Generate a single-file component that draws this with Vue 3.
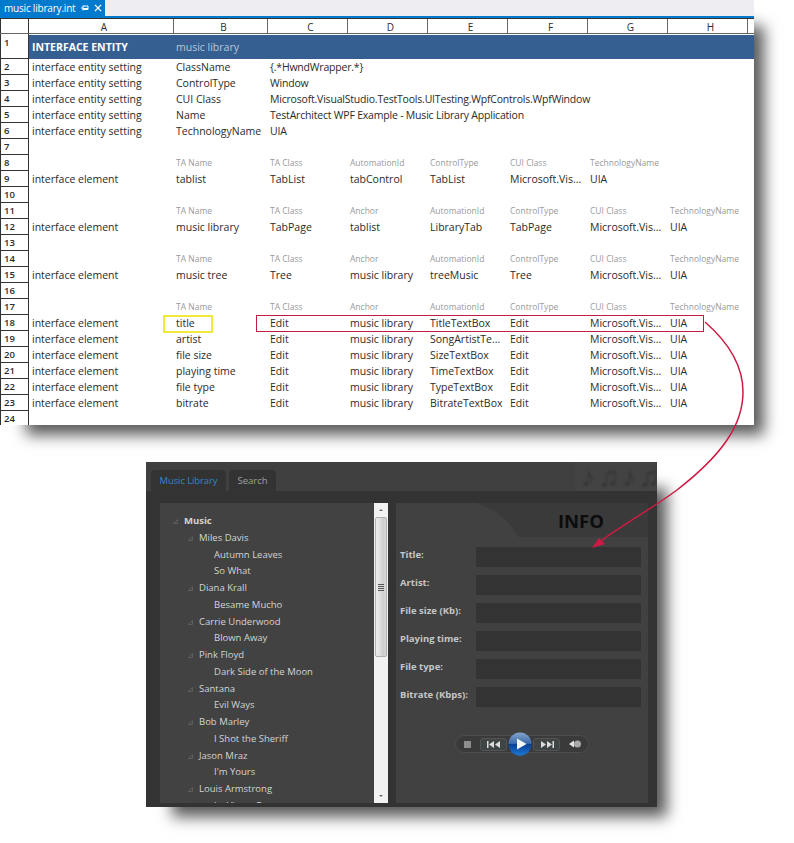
<template>
  <div class="page">
    <div class="sheet-wrap">
      <div class="doc-tabs">
        <div class="doc-tab">
          <span class="doc-name">music library.int</span>
          <svg class="pin" width="10" height="10" viewBox="0 0 10 10">
            <path d="M1 5h2M3 2.500v5M3 3h5v3.500H3M3 5.500h5" fill="none" stroke="#fff" stroke-width="1" />
          </svg>
          <svg class="close" width="8" height="8" viewBox="0 0 9 9">
            <path d="M1 1l7 7M8 1l-7 7" fill="none" stroke="#fff" stroke-width="1.500" />
          </svg>
        </div>
      </div>
      <div class="sheet">
        <div class="col-head">
          <div class="corner"></div>
          <div v-for="c in columns" :key="c" class="col-cell">{{ c }}</div>
          <div class="col-cell"></div>
        </div>
        <div v-for="(row, i) in rows" :key="i" class="row" :class="row.kind">
          <div class="row-num">{{ i + 1 }}</div>
          <div
            v-for="(cell, j) in 8"
            :key="j"
            class="cell"
            :class="{ wide: row.wide && j === 2 }"
          >{{ row.cells[j] || '' }}</div>
          <div class="cell"></div>
        </div>
        <div class="mark-yellow"></div>
        <div class="mark-red"></div>
      </div>
    </div>

    <div class="window">
      <div class="win-top">
        <div class="win-tab active">Music Library</div>
        <div class="win-tab">Search</div>
        <div class="notes"><span>♪♫♪♫</span></div>
      </div>
      <div class="win-body">
        <div class="tree-box">
          <div class="tree">
            <div
              v-for="item in tree"
              :key="item.text"
              class="tree-line"
              :class="'level-' + item.level"
            >
              <svg v-if="item.level < 2" class="arrow" width="5" height="5" viewBox="0 0 5 5">
                <path d="M4.500 0.500v4h-4z" fill="none" stroke="#666" stroke-width="0.800" />
              </svg>
              {{ item.text }}
            </div>
          </div>
          <div class="scrollbar">
            <div class="sb-btn"><span class="up"></span></div>
            <div class="sb-thumb"><span class="grip"></span></div>
            <div class="sb-rest"></div>
            <div class="sb-btn"><span class="down"></span></div>
          </div>
        </div>
        <div class="info">
          <div class="info-head">
            <svg class="info-bg" width="252" height="34" viewBox="0 0 252 34">
              <path d="M81 0C102 8 114 18 122 34H252V0z" fill="#3a3a3a" />
            </svg>
            <span class="info-title">INFO</span>
          </div>
          <div class="fields">
            <div v-for="f in fields" :key="f" class="field">
              <label>{{ f }}</label>
              <div class="input"></div>
            </div>
          </div>
          <div class="player">
            <div class="pill">
              <span class="stop"></span>
              <div class="seek">
                <svg width="14" height="7" viewBox="0 0 14 7"><path d="M0 0h1.500v7H0zM7 0v7L2 3.500zM13 0v7L8 3.500z" fill="#ddd" /></svg>
              </div>
              <div class="play">
                <svg width="24" height="24" viewBox="0 0 24 24">
                  <defs>
                    <linearGradient id="ball" x1="0" y1="0" x2="0" y2="1">
                      <stop offset="0" stop-color="#86a5cc" />
                      <stop offset="0.48" stop-color="#3a69ac" />
                      <stop offset="0.52" stop-color="#0b4195" />
                      <stop offset="1" stop-color="#1a78d6" />
                    </linearGradient>
                  </defs>
                  <circle cx="12" cy="12" r="11.500" fill="url(#ball)" />
                  <path d="M9 6.500L18.500 12 9 17.500z" fill="#f4f6f8" />
                </svg>
              </div>
              <div class="seek right">
                <svg width="14" height="7" viewBox="0 0 14 7"><path d="M1 0v7l5-3.500zM7 0v7l5-3.500zM12.500 0H14v7h-1.500z" fill="#ddd" /></svg>
              </div>
              <svg class="vol" width="12" height="8" viewBox="0 0 12 8">
                <path d="M0 4L5 0.500v7z" fill="#e4e4e4" />
                <circle cx="8.500" cy="4" r="3.500" fill="#a8a8a8" />
              </svg>
            </div>
          </div>
        </div>
      </div>
    </div>

    <svg class="arrow-line" width="794" height="843" viewBox="0 0 794 843">
      <path d="M705 322C728 342 743 365 743 392C743 425 722 455 677 490C650 510 620 526 594 546" fill="none" stroke="#cc1a44" stroke-width="1.500" />
      <path d="M592 548L605 544L599 538z" fill="#cc1a44" />
    </svg>
  </div>
</template>

<script setup>
const columns = ['A', 'B', 'C', 'D', 'E', 'F', 'G', 'H']

const setting = 'interface entity setting'
const element = 'interface element'
const cui = 'Microsoft.Vis...'
const lib = 'music library'

const blank = () => ({ cells: [] })
const head = (...cells) => ({ kind: 'small', cells: ['', ...cells] })
const edit = (name, auto) => ({
  cells: [element, name, 'Edit', lib, auto, 'Edit', cui, 'UIA'],
})
const anchorHead = () =>
  head('TA Name', 'TA Class', 'Anchor', 'AutomationId', 'ControlType', 'CUI Class', 'TechnologyName')

const rows = [
  { kind: 'title', cells: ['INTERFACE ENTITY', 'music library'] },
  { wide: true, cells: [setting, 'ClassName', '{.*HwndWrapper.*}'] },
  { wide: true, cells: [setting, 'ControlType', 'Window'] },
  { wide: true, cells: [setting, 'CUI Class', 'Microsoft.VisualStudio.TestTools.UITesting.WpfControls.WpfWindow'] },
  { wide: true, cells: [setting, 'Name', 'TestArchitect WPF Example - Music Library Application'] },
  { wide: true, cells: [setting, 'TechnologyName', 'UIA'] },
  blank(),
  head('TA Name', 'TA Class', 'AutomationId', 'ControlType', 'CUI Class', 'TechnologyName'),
  { cells: [element, 'tablist', 'TabList', 'tabControl', 'TabList', cui, 'UIA'] },
  blank(),
  anchorHead(),
  { cells: [element, lib, 'TabPage', 'tablist', 'LibraryTab', 'TabPage', cui, 'UIA'] },
  blank(),
  anchorHead(),
  { cells: [element, 'music tree', 'Tree', lib, 'treeMusic', 'Tree', cui, 'UIA'] },
  blank(),
  anchorHead(),
  edit('title', 'TitleTextBox'),
  edit('artist', 'SongArtistTe...'),
  edit('file size', 'SizeTextBox'),
  edit('playing time', 'TimeTextBox'),
  edit('file type', 'TypeTextBox'),
  edit('bitrate', 'BitrateTextBox'),
  blank(),
]

const tree = [
  { level: 0, text: 'Music' },
  { level: 1, text: 'Miles Davis' },
  { level: 2, text: 'Autumn Leaves' },
  { level: 2, text: 'So What' },
  { level: 1, text: 'Diana Krall' },
  { level: 2, text: 'Besame Mucho' },
  { level: 1, text: 'Carrie Underwood' },
  { level: 2, text: 'Blown Away' },
  { level: 1, text: 'Pink Floyd' },
  { level: 2, text: 'Dark Side of the Moon' },
  { level: 1, text: 'Santana' },
  { level: 2, text: 'Evil Ways' },
  { level: 1, text: 'Bob Marley' },
  { level: 2, text: 'I Shot the Sheriff' },
  { level: 1, text: 'Jason Mraz' },
  { level: 2, text: "I'm Yours" },
  { level: 1, text: 'Louis Armstrong' },
  { level: 2, text: 'La Vie en Rose' },
]

const fields = ['Title:', 'Artist:', 'File size (Kb):', 'Playing time:', 'File type:', 'Bitrate (Kbps):']
</script>

<style scoped>
.page {
  position: relative;
  width: 794px;
  height: 843px;
  overflow: hidden;
  background: #fff;
  font-family: "Open Sans", "Noto Sans", sans-serif;
  font-size: 10.5px;
  color: #2b2b2b;
}

.sheet-wrap {
  width: 754px;
  height: 425px;
  box-shadow: 18px 18px 14px -8px rgba(0, 0, 0, 0.65);
  background: #fff;
}

.doc-tabs {
  height: 16px;
  background: #eeeef2;
  border-bottom: 2px solid #007acc;
}

.doc-tab {
  display: flex;
  align-items: center;
  width: 105px;
  height: 16px;
  padding-left: 4px;
  box-sizing: border-box;
  background: #007acc;
  color: #fff;
}

.doc-name {
  flex: none;
  width: 74px;
  white-space: nowrap;
  font-size: 10px;
  letter-spacing: -0.2px;
}

.pin {
  margin-left: 2px;
}

.close {
  margin-left: 4px;
}

.sheet {
  position: relative;
  height: 407px;
  overflow: hidden;
}

.col-head,
.row {
  display: grid;
  grid-template-columns: 29px 144px 94px 80px 80px 80px 80px 80px 80px 7px;
}

.col-head {
  height: 14px;
  border-top: 1px solid #333;
  border-bottom: 1px solid #666;
  background: #fff;
}

.corner {
  border-left: 1px solid #333;
  border-right: 1px solid #333;
}

.col-cell {
  height: 14px;
  box-sizing: border-box;
  border-left: 1px solid #666;
  padding: 2px 0 0 6px;
  text-align: center;
  line-height: 12px;
  font-size: 10px;
}

.corner + .col-cell {
  border-left: 0;
}

.row {
  height: 16px;
}

.row.title {
  height: 25px;
}

.row-num {
  border-left: 1px solid #333;
  border-right: 1px solid #333;
  border-bottom: 1px solid #333;
  padding-left: 3px;
  font-size: 9.5px;
  font-weight: 600;
  line-height: 15px;
  background: #fff;
}

.row.title .row-num {
  line-height: 18px;
}

.cell {
  padding-left: 3px;
  line-height: 16px;
  white-space: nowrap;
  overflow: hidden;
  min-width: 0;
}

.cell.wide {
  overflow: visible;
  letter-spacing: -0.2px;
}

.row.title .cell {
  background: #365f91;
  color: #b8c7da;
  line-height: 25px;
  margin: 1px 0 0;
}

.row.title .cell:nth-child(2) {
  color: #fff;
  font-weight: 700;
}

.row.small .cell {
  font-size: 8.5px;
  color: #9a9a9a;
  line-height: 15px;
}

.mark-yellow {
  position: absolute;
  left: 163px;
  top: 297px;
  width: 50px;
  height: 18px;
  border: 2px solid #f2ea3a;
  box-sizing: border-box;
}

.mark-red {
  position: absolute;
  left: 256px;
  top: 297px;
  width: 448px;
  height: 17px;
  border: 1px solid #c01c42;
  box-sizing: border-box;
}

.window {
  width: 511px;
  height: 345px;
  margin: 37px 0 0 146px;
  background: #333;
  box-shadow: 18px 18px 14px -8px rgba(0, 0, 0, 0.65);
}

.win-top {
  position: relative;
  display: flex;
  align-items: flex-end;
  gap: 3px;
  height: 29px;
  padding-left: 5px;
  background: #404040;
}

.win-tab {
  padding: 0 5px;
  height: 21px;
  line-height: 21px;
  border-radius: 4px 4px 0 0;
  font-size: 9.5px;
  color: #a0a0a0;
  background: #333;
  box-sizing: border-box;
  text-align: center;
  white-space: nowrap;
}

.win-tab.active {
  width: 75px;
  color: #2f86c9;
  letter-spacing: -0.1px;
}

.win-tab:nth-child(2) {
  width: 47px;
}

.notes {
  position: absolute;
  right: 0;
  top: 0;
  width: 82px;
  height: 29px;
  padding-left: 6px;
  box-sizing: border-box;
  overflow: hidden;
  background: #434343;
}

.notes span {
  display: block;
  font-size: 28px;
  line-height: 27px;
  letter-spacing: 3px;
  color: #343434;
  white-space: nowrap;
  filter: blur(1px);
}

.win-body {
  display: flex;
  gap: 8px;
  padding: 12px 9px 4px 14px;
  height: 316px;
  box-sizing: border-box;
}

.tree-box {
  display: flex;
  width: 228px;
  height: 300px;
  background: #424242;
}

.tree {
  flex: 1;
  padding: 10px 0 0 15px;
  overflow: hidden;
  color: #d4d4d4;
  font-size: 9.5px;
}

.tree-line {
  position: relative;
  height: 16.75px;
  line-height: 16.75px;
  white-space: nowrap;
}

.level-0 {
  padding-left: 9px;
  font-weight: 700;
}

.level-1 {
  padding-left: 24px;
}

.level-2 {
  padding-left: 39px;
}

.arrow {
  position: absolute;
  top: 6px;
}

.level-0 .arrow {
  left: -2px;
}

.level-1 .arrow {
  left: 13px;
}

.scrollbar {
  display: flex;
  flex-direction: column;
  width: 14px;
  background: #f2f2f2;
}

.sb-btn {
  display: flex;
  align-items: center;
  justify-content: center;
  height: 14px;
}

.up,
.down {
  width: 0;
  height: 0;
  border-left: 2px solid transparent;
  border-right: 2px solid transparent;
}

.up {
  border-bottom: 2px solid #666;
}

.down {
  border-top: 2px solid #666;
}

.sb-thumb {
  display: flex;
  align-items: center;
  justify-content: center;
  height: 138px;
  margin: 0 1px;
  border: 1px solid #b0b0b0;
  border-radius: 2px;
  background: linear-gradient(90deg, #ececec, #e2e2e2 35%, #cdcdcd 70%, #d8d8d8);
}

.grip {
  width: 6px;
  height: 7px;
  background: repeating-linear-gradient(#555 0 1px, transparent 1px 2px);
}

.sb-rest {
  flex: 1;
}

.info {
  width: 252px;
  height: 300px;
  background: #414141;
}

.info-head {
  position: relative;
  height: 34px;
  display: flex;
  justify-content: flex-end;
  align-items: center;
  padding-right: 44px;
}

.info-bg {
  position: absolute;
  left: 0;
  top: 0;
}

.info-title {
  position: relative;
  font-size: 18.5px;
  font-weight: 700;
  color: #0c0c0c;
}

.fields {
  display: flex;
  flex-direction: column;
  gap: 8px;
  margin-top: 10px;
  padding: 0 7px 0 4px;
}

.field {
  display: flex;
  height: 20px;
}

label {
  width: 76px;
  flex: none;
  color: #c6c6c6;
  font-size: 9.5px;
  font-weight: 700;
  line-height: 16px;
  white-space: nowrap;
}

.input {
  flex: 1;
  background: #333;
}

.player {
  display: flex;
  justify-content: center;
  margin-top: 28px;
}

.pill {
  display: flex;
  align-items: center;
  width: 134px;
  height: 18px;
  padding-left: 8px;
  box-sizing: border-box;
  border-radius: 9px;
  border: 1px solid #4d4d4d;
  background: #3a3a3a;
}

.stop {
  width: 7px;
  height: 7px;
  background: #8d8d8d;
}

.seek {
  display: flex;
  align-items: center;
  justify-content: center;
  width: 27px;
  height: 13px;
  margin-left: 9px;
  border: 1px solid #555;
  border-radius: 3px;
  box-sizing: border-box;
  background: #3f4445;
}

.seek.right {
  margin-left: 0;
}

.play {
  width: 24px;
  height: 24px;
  margin: 0 1px;
  z-index: 1;
}

.play svg {
  display: block;
}

.vol {
  margin-left: 9px;
}

.arrow-line {
  position: absolute;
  left: 0;
  top: 0;
  pointer-events: none;
}
</style>

<style>
html,
body {
  margin: 0;
  background: #fff;
}
</style>
